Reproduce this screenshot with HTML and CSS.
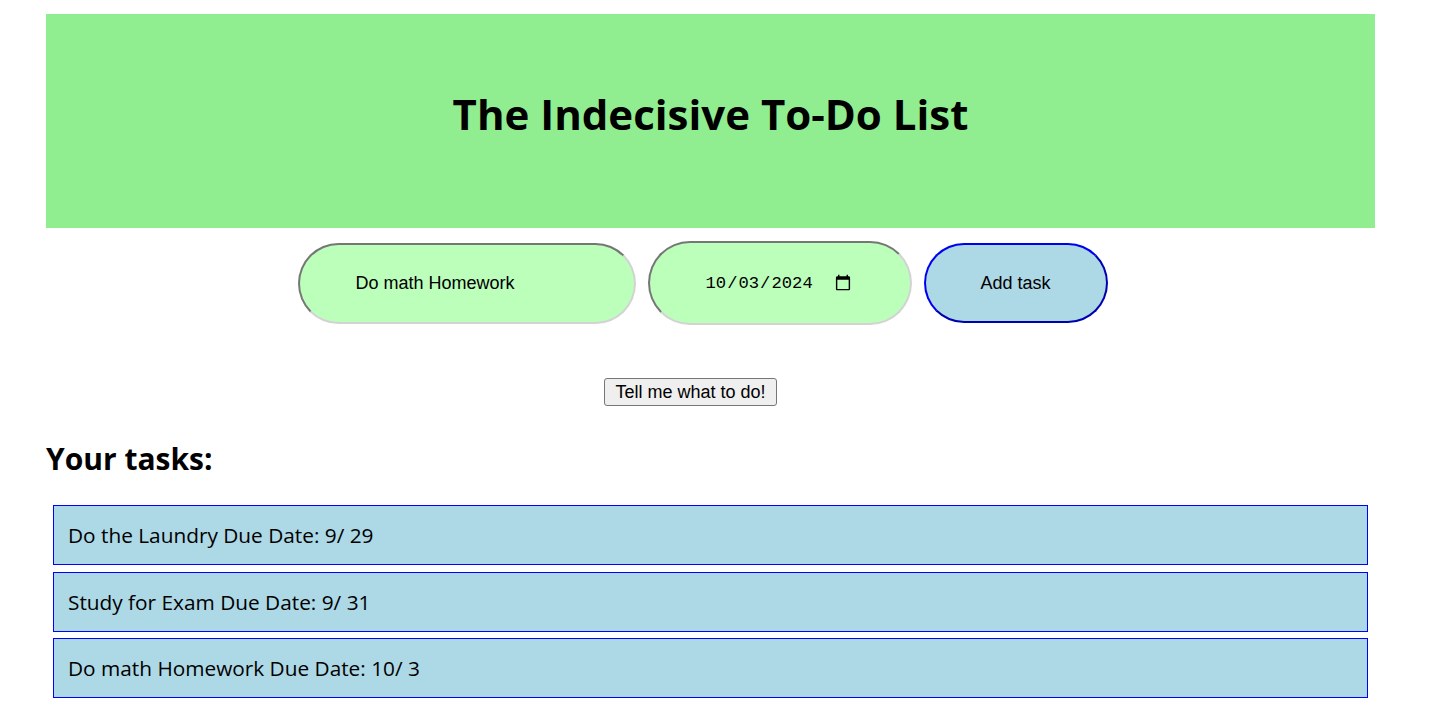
FILE: index.html
```html
<!DOCTYPE html>
<html lang="en">
<head>
<meta charset="utf-8">
<title>The Indecisive To-Do List</title>
<link rel="stylesheet" href="styles.css">
</head>
<body>
<header class="banner">
  <h1 class="title">The Indecisive To-Do List</h1>
</header>
<form class="form-row" onsubmit="return false">
  <input class="task-input" type="text" value="Do math Homework">
  <input class="date-input" type="date" value="2024-10-03">
  <button class="add-btn" type="button">Add task</button>
</form>
<div class="tell-row">
  <button class="tell-btn" type="button">Tell me what to do!</button>
</div>
<h2 class="tasks-heading">Your tasks:</h2>
<ul class="task-list">
  <li class="task">Do the Laundry Due Date: 9/ 29</li>
  <li class="task">Study for Exam Due Date: 9/ 31</li>
  <li class="task">Do math Homework Due Date: 10/ 3</li>
</ul>
</body>
</html>
```
FILE: styles.css
```css
html, body {
  background: #ffffff;
}
body {
  margin: 0;
  padding: 14px 62px 20px 46px;
  font-family: "Open Sans", "Noto Sans", sans-serif;
  color: #000;
}
.banner {
  background: #90ee90;
  height: 214px;
  box-sizing: border-box;
  display: flex;
  align-items: center;
  justify-content: center;
  padding-bottom: 13px;
}
.title {
  margin: 0;
  font-size: 42px;
  font-weight: 700;
  line-height: 1.2;
}
.form-row {
  margin: 13px 0 0;
  display: flex;
  justify-content: center;
  align-items: center;
  gap: 12px;
  padding-right: 16px;
  height: 84px;
}
.task-input,
.date-input,
.add-btn {
  box-sizing: border-box;
  border-radius: 50px;
  font-family: "Liberation Sans", Arial, sans-serif;
  font-size: 18px;
  color: #000;
  margin: 0;
}
.task-input,
.date-input {
  background: #bbffbb;
  border: 2px solid;
  border-color: #767676 #d3d3d3 #d3d3d3 #767676;
  padding: 0 56px;
}
.task-input {
  width: 338px;
  height: 81px;
}
.date-input {
  width: 264px;
  height: 84px;
  padding-left: 55px;
  font-family: "Liberation Mono", "DejaVu Sans Mono", monospace;
  font-size: 17.2px;
}
.add-btn {
  width: 184px;
  height: 80px;
  background: #add8e6;
  border: 2px solid;
  border-color: #0000f0 #0000b0 #0000b0 #0000f0;
  padding: 0;
}
.tell-row {
  margin-top: 53px;
  text-align: center;
  padding-right: 40px;
}
.tell-btn {
  font-family: "Liberation Sans", Arial, sans-serif;
  font-size: 18px;
  color: #000;
  background: #efefef;
  border: 1px solid #767676;
  border-radius: 3px;
  height: 28px;
  padding: 0 10px;
  margin: 0;
}
.tasks-heading {
  margin: 33px 0 0;
  font-size: 30px;
  font-weight: 700;
  line-height: 1.3;
}
.task-list {
  list-style: none;
  margin: 27px 7px 0;
  padding: 0;
  display: flex;
  flex-direction: column;
  gap: 6.5px;
}
.task {
  box-sizing: border-box;
  height: 60px;
  background: #add8e6;
  border: 1px solid #0000ff;
  display: flex;
  align-items: center;
  padding-left: 14px;
  font-size: 20.8px;
}
```
